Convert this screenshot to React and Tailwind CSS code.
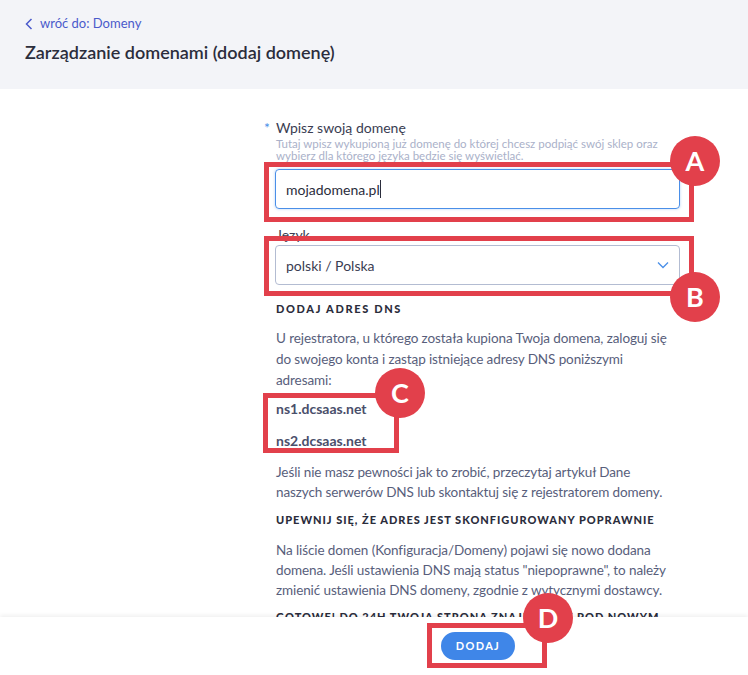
import React from 'react';

const font = { fontFamily: '"Source Sans Pro", Lato, "Noto Sans", sans-serif' };

// red annotation frame + lettered badge
function Marker({ box, badge, letter }) {
  return (
    <>
      <div
        className="absolute border-[5px] border-[#e2404b] pointer-events-none"
        style={{ left: box[0], top: box[1], width: box[2], height: box[3] }}
      />
      <div
        className="absolute w-[50px] h-[50px] rounded-full bg-[#e2404b] flex items-center justify-center text-white text-[27px] font-bold"
        style={{ left: badge[0] - 25, top: badge[1] - 25 }}
      >
        {letter}
      </div>
    </>
  );
}

export default function App() {
  return (
    <div className="relative w-[748px] h-[675px] flex flex-col bg-white overflow-hidden" style={font}>
      <header className="h-[89px] bg-[#f3f4f8] px-[25px] pt-[14px]">
        <a className="flex items-center gap-[7px] text-[13px] text-[#4a5acb]">
          <svg width="8" height="12" viewBox="0 0 8 12" fill="none" stroke="currentColor" strokeWidth="1.5">
            <path d="M6.5 1 L1.5 6 L6.5 11" />
          </svg>
          wróć do: Domeny
        </a>
        <h1 className="mt-[5px] text-[18px] font-semibold text-[#2b2d3c]">Zarządzanie domenami (dodaj domenę)</h1>
      </header>

      <main className="flex-1 overflow-hidden pl-[276px] pr-[62px] pt-[28px] text-[#585e7b]">
        <div className="relative text-[14px] text-[#3a3d52]">
          <span className="absolute -left-[12px] text-[#4a8fe8]">*</span>
          Wpisz swoją domenę
        </div>
        <p className="text-[11.5px] leading-[12px] text-[#aab1c9] pr-[20px]">
          Tutaj wpisz wykupioną już domenę do której chcesz podpiąć swój sklep oraz wybierz dla którego języka będzie się wyświetlać.
        </p>
        <div className="-ml-px mt-[7px] w-[405px] h-[40px] border border-[#4a8fe8] rounded-[4px] shadow-[0_0_3px_rgba(74,143,232,0.4)] flex items-center px-[10px] text-[14px] text-[#2b2d3c]">
          mojadomena.pl<span className="w-px h-[18px] bg-[#2b2d3c]" />
        </div>

        <div className="mt-[17px] text-[14px] text-[#3a3d52] leading-[18px]">Język</div>
        <div className="-ml-px mt-[1px] w-[405px] h-[40px] border border-[#b3bcd2] rounded-[4px] flex items-center justify-between px-[10px] text-[14px] text-[#3a3d52]">
          polski / Polska
          <svg width="12" height="8" viewBox="0 0 12 8" fill="none" stroke="#4a8fe8" strokeWidth="1.3">
            <path d="M1 1.5 L6 6.5 L11 1.5" />
          </svg>
        </div>

        <h3 className="mt-[16px] text-[11px] font-black tracking-[0.15em] text-[#2b2d3c]">DODAJ ADRES DNS</h3>
        <p className="mt-[10px] w-[396px] text-[13.5px] leading-[21px] tracking-[-0.1px]">
          U rejestratora, u którego została kupiona Twoja domena, zaloguj się do swojego konta i zastąp istniejące adresy DNS poniższymi adresami:
        </p>
        <p className="mt-[7px] text-[14px] font-bold text-[#4a4f6b]">ns1.dcsaas.net</p>
        <p className="mt-[11px] text-[14px] font-bold text-[#4a4f6b]">ns2.dcsaas.net</p>
        <p className="mt-[11px] w-[396px] text-[13.5px] leading-[20px] tracking-[-0.1px]">
          Jeśli nie masz pewności jak to zrobić, przeczytaj artykuł Dane naszych serwerów DNS lub skontaktuj się z rejestratorem domeny.
        </p>
        <h3 className="mt-[10px] text-[11px] font-black tracking-[0.09em] text-[#2b2d3c] whitespace-nowrap">UPEWNIJ SIĘ, ŻE ADRES JEST SKONFIGUROWANY POPRAWNIE</h3>
        <p className="mt-[12px] w-[396px] text-[13.5px] leading-[20px] tracking-[-0.1px]">
          Na liście domen (Konfiguracja/Domeny) pojawi się nowo dodana domena. Jeśli ustawienia DNS mają status "niepoprawne", to należy zmienić ustawienia DNS domeny, zgodnie z wytycznymi dostawcy.
        </p>
        <h3 className="mt-[9px] w-[396px] text-[11px] font-black tracking-[0.09em] text-[#2b2d3c]">GOTOWE! DO 24H TWOJA STRONA ZNAJDZIE SIĘ POD NOWYM ADRESEM</h3>
      </main>

      <footer className="h-[58px] bg-white shadow-[0_-2px_4px_rgba(0,0,0,0.06)] pl-[276px] pt-[15px]">
        <div className="w-[404px] flex justify-center">
          <button className="w-[74px] h-[28px] rounded-full bg-[#3f86e8] text-white text-[11px] font-bold tracking-[0.12em]">
            DODAJ
          </button>
        </div>
      </footer>

      <Marker box={[264, 162, 430, 60]} badge={[695, 161]} letter="A" />
      <Marker box={[264, 236, 430, 60]} badge={[695, 297]} letter="B" />
      <Marker box={[263, 393, 136, 60]} badge={[400, 393]} letter="C" />
      <Marker box={[427, 623, 120, 45]} badge={[548, 618]} letter="D" />
    </div>
  );
}
